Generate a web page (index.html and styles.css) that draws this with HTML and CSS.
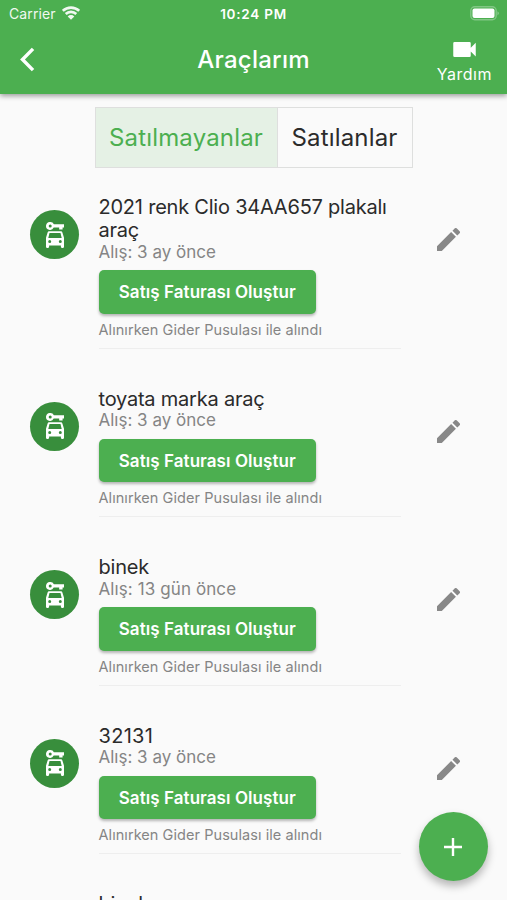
FILE: index.html
```html
<!DOCTYPE html>
<html lang="tr">
<head>
<meta charset="utf-8">
<title>Araçlarım</title>
<link rel="stylesheet" href="styles.css">
</head>
<body>
<svg class="defs" width="0" height="0" aria-hidden="true">
  <symbol id="car" viewBox="0 0 18 26"><path fill-rule="evenodd" d="M4.200 0a4 4 0 0 1 3.700 2.200H18v3.400h-1.400v1.900h-3.400V5.600H7.700A4 4 0 1 1 4.200 0zm0 2.500a1.500 1.500 0 1 0 0 3 1.500 1.500 0 0 0 0-3zM3.400 9.200h11.200c1 0 1.500.4 1.800 1.200L18 15.800v9c0 .7-.4 1.200-1 1.200h-1c-.7 0-1.100-.5-1.100-1.200v-1.300H3.100v1.300C3.100 25.500 2.700 26 2 26H1c-.6 0-1-.5-1-1.200v-9l1.600-5.400C1.900 9.600 2.400 9.200 3.400 9.200zM3.500 11 2.300 16h13.400L14.500 11zM3.700 18a1.500 1.500 0 1 0 0 3 1.500 1.500 0 0 0 0-3zm10.600 0a1.500 1.500 0 1 0 0 3 1.500 1.500 0 0 0 0-3z"/></symbol>
  <symbol id="pencil" viewBox="3 3 18 18"><path d="M3 17.250V21h3.750L17.810 9.940l-3.750-3.750L3 17.250zM20.710 7.040a1 1 0 0 0 0-1.410l-2.340-2.340a1 1 0 0 0-1.410 0l-1.830 1.830 3.750 3.750 1.830-1.830z"/></symbol>
</svg>
<header class="top">
  <div class="status">
    <div class="carrier"><span>Carrier</span>
      <svg class="wifi" viewBox="0 0 18 14"><g fill="none" stroke="currentColor" stroke-width="2.600"><path d="M.8 4.900a11.800 11.800 0 0 1 16.400 0M3.700 8a7.600 7.600 0 0 1 10.600 0"/></g><path d="M9 13.800 5.700 10.400a4.700 4.700 0 0 1 6.600 0z"/></svg>
    </div>
    <span class="clock">10:24 PM</span>
    <svg class="battery" viewBox="0 0 30 15"><rect x=".8" y=".8" width="25.400" height="13" rx="4" fill="none" stroke="currentColor" stroke-width="1.400" opacity=".3"/><rect x="2.500" y="2.500" width="22" height="9.600" rx="2"/><path d="M27.600 5.200q2 2 0 4.200z" opacity=".5"/></svg>
  </div>
  <div class="bar">
    <svg class="back" viewBox="0 0 14 24"><path d="M12.300 1.800 2.200 12l10.100 10.200" fill="none" stroke="currentColor" stroke-width="3.300"/></svg>
    <h1>Araçlarım</h1>
    <div class="help">
      <svg viewBox="3 6 18 12"><path d="M17 10.500V7a1 1 0 0 0-1-1H4a1 1 0 0 0-1 1v10a1 1 0 0 0 1 1h12a1 1 0 0 0 1-1v-3.500l4 4v-11z"/></svg>
      <span>Yardım</span>
    </div>
  </div>
</header>
<nav class="tabs"><div class="tab active"><span>Satılmayanlar</span></div><div class="tab"><span>Satılanlar</span></div></nav>
<main class="list">
  <article class="item">
    <div class="avatar"><svg><use href="#car"/></svg></div>
    <div class="body"><h2>2021 renk Clio 34AA657 plakalı araç</h2><p class="date">Alış: 3 ay önce</p><button><span>Satış Faturası Oluştur</span></button><p class="note">Alınırken Gider Pusulası ile alındı</p></div>
    <svg class="edit"><use href="#pencil"/></svg>
  </article>
  <article class="item">
    <div class="avatar"><svg><use href="#car"/></svg></div>
    <div class="body"><h2>toyata marka araç</h2><p class="date">Alış: 3 ay önce</p><button><span>Satış Faturası Oluştur</span></button><p class="note">Alınırken Gider Pusulası ile alındı</p></div>
    <svg class="edit"><use href="#pencil"/></svg>
  </article>
  <article class="item">
    <div class="avatar"><svg><use href="#car"/></svg></div>
    <div class="body"><h2>binek</h2><p class="date wide">Alış: 13 gün önce</p><button><span>Satış Faturası Oluştur</span></button><p class="note">Alınırken Gider Pusulası ile alındı</p></div>
    <svg class="edit"><use href="#pencil"/></svg>
  </article>
  <article class="item">
    <div class="avatar"><svg><use href="#car"/></svg></div>
    <div class="body"><h2 class="digits">32131</h2><p class="date">Alış: 3 ay önce</p><button><span>Satış Faturası Oluştur</span></button><p class="note">Alınırken Gider Pusulası ile alındı</p></div>
    <svg class="edit"><use href="#pencil"/></svg>
  </article>
  <article class="item">
    <div></div>
    <div class="body"><h2>binek</h2></div>
  </article>
</main>
<div class="fab"><svg viewBox="0 0 18 18"><path d="M9 0v18M0 9h18" stroke="currentColor" stroke-width="2.400"/></svg></div>
</body>
</html>
```
FILE: styles.css
```css
* { box-sizing: border-box; margin: 0; padding: 0; }
body {
  position: relative;
  height: 900px;
  overflow: hidden;
  display: flex;
  flex-direction: column;
  background: #fafafa;
  color: #2b2b2b;
  font-family: Inter, "Liberation Sans", sans-serif;
}
svg { display: block; fill: currentColor; flex: none; }
.defs { position: absolute; }
.top {
  height: 94px;
  flex: none;
  background: #4caf50;
  color: #fff;
  box-shadow: 0 2px 5px rgba(0, 0, 0, .38);
}
.status {
  height: 27px;
  padding: 0 7px 0 9px;
  display: grid;
  grid-template-columns: 1fr auto 1fr;
  align-items: center;
  font-size: 14px;
}
.carrier { display: flex; align-items: center; gap: 6px; letter-spacing: .1px; opacity: .92; }
.wifi { width: 18px; height: 14px; margin-top: -2px; }
.clock { font-weight: 600; font-size: 13.5px; letter-spacing: .75px; margin-right: 2px; }
.battery { width: 30px; height: 15px; justify-self: end; }
.bar {
  height: 67px;
  padding: 0 15px 0 20px;
  display: grid;
  grid-template-columns: 1fr auto 1fr;
  align-items: center;
}
.back { width: 15px; height: 25px; margin-top: -2px; }
h1 { font-size: 24px; font-weight: 500; line-height: 28px; letter-spacing: .25px; margin: -2px 5px 0 0; }
.help {
  justify-self: end;
  display: flex;
  flex-direction: column;
  align-items: center;
  gap: 7px;
  padding-top: 4px;
  font-size: 16px;
  line-height: 20px;
  letter-spacing: .5px;
}
.help svg { width: 23px; height: 15px; }
.tabs {
  flex: none;
  align-self: center;
  display: flex;
  width: 318px;
  height: 61px;
  margin-top: 13px;
  border: 1px solid #dedfde;
  font-size: 24px;
  letter-spacing: .18px;
}
.tab { flex: 1; display: flex; align-items: center; justify-content: center; }
.tab.active {
  flex: 0 0 182px;
  color: #4caf50;
  background: #e5f1e5;
  border-right: 1px solid #dedfde;
}
.list { padding: 27.5px 0 0 30px; display: flex; flex-direction: column; gap: 38.5px; }
.item {
  display: grid;
  grid-template-columns: 49px 302px 23px;
  column-gap: 19.5px;
  align-items: start;
}
.item .edit { margin: 32.5px 0 0 17px; }
.avatar {
  width: 49px;
  height: 49px;
  margin-top: 14.5px;
  border-radius: 50%;
  background: #388e3c;
  color: #fff;
  display: flex;
  align-items: center;
  justify-content: center;
}
.avatar svg { width: 18px; height: 26px; }
.body { display: flex; flex-direction: column; align-items: flex-start; border-bottom: 1px solid #eee; padding-bottom: 8px; }
h2 { font-size: 20px; font-weight: 400; line-height: 23px; letter-spacing: -.22px; padding-top: .6px; margin-bottom: -.4px; }
.digits { letter-spacing: .3px; }
.date { font-size: 17px; line-height: 20px; color: #858585; }
.date.wide { letter-spacing: .1px; }
button {
  width: 217.5px;
  height: 43.5px;
  margin: 8.5px 0 5.9px;
  border: 0;
  border-radius: 5px;
  background: #4caf50;
  color: #fff;
  font: 600 17px/20px Inter, sans-serif;
  letter-spacing: .07px;
  box-shadow: 0 2px 3px rgba(0, 0, 0, .28);
}
.note { font-size: 14.5px; line-height: 20px; letter-spacing: .06px; color: #858585; }
.edit { width: 23px; height: 23px; color: #888; }
.fab {
  position: absolute;
  left: 418.5px;
  top: 812px;
  width: 69px;
  height: 69px;
  border-radius: 50%;
  background: #4caf50;
  color: #fff;
  display: flex;
  align-items: center;
  justify-content: center;
  box-shadow: 0 5px 9px rgba(0, 0, 0, .28);
}
.fab svg { width: 18px; height: 18px; }
```
